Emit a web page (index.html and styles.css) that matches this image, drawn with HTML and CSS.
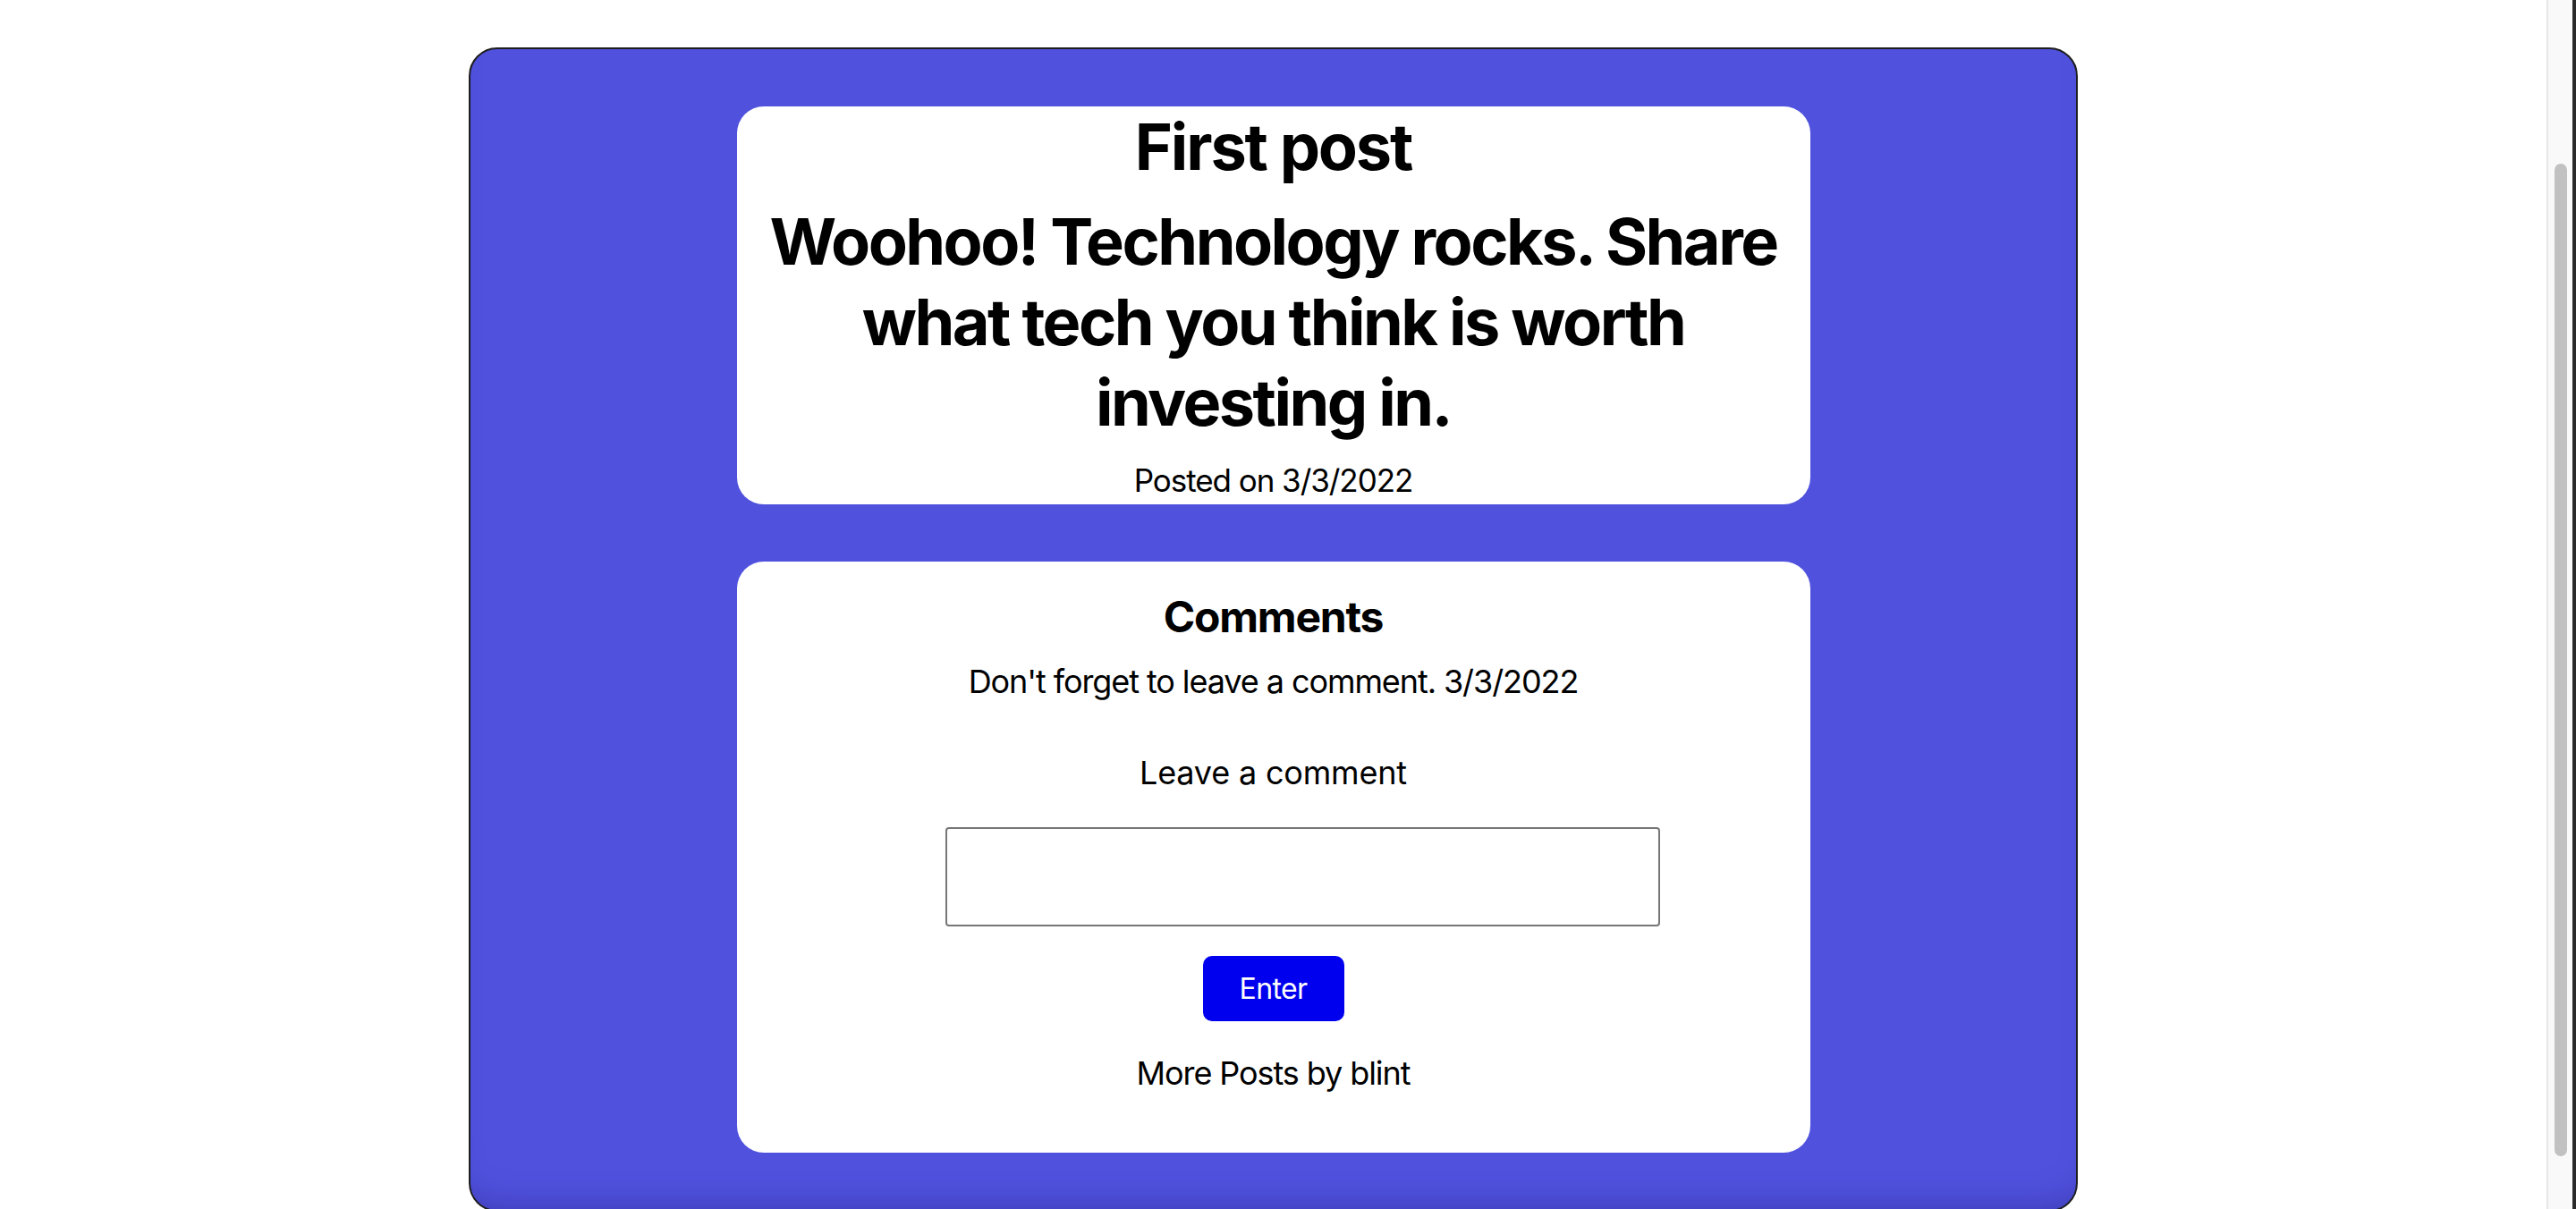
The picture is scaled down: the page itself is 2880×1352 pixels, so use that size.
FILE: index.html
```html
<!DOCTYPE html>
<html lang="en">
<head>
<meta charset="utf-8">
<title>First post</title>
<link rel="stylesheet" href="styles.css">
</head>
<body>
<div class="window">
  <main class="page">
    <section class="board">
      <article class="card post">
        <h1 class="post-title">First post</h1>
        <h2 class="post-body">Woohoo! Technology rocks. Share what tech you think is worth investing in.</h2>
        <p class="post-date">Posted on 3/3/2022</p>
      </article>
      <article class="card comments">
        <h3 class="comments-title">Comments</h3>
        <p class="comment">Don't forget to leave a comment. 3/3/2022</p>
        <label class="leave" for="c">Leave a comment</label>
        <textarea id="c" class="comment-input"></textarea>
        <button class="enter">Enter</button>
        <p class="more">More Posts by blint</p>
      </article>
    </section>
  </main>
  <div class="scrollbar"><div class="thumb"></div></div>
  <div class="edge"></div>
</div>
</body>
</html>
```
FILE: styles.css
```css
html, body {
  margin: 0;
  padding: 0;
  height: 1352px;
  overflow: hidden;
  background: #ffffff;
}
body {
  font-family: Inter, "Noto Sans", "Liberation Sans", sans-serif;
  color: #000;
}
.window {
  display: flex;
  height: 1352px;
}
.page {
  flex: 1;
  display: flex;
  justify-content: center;
  align-items: flex-start;
  padding-top: 53px;
  overflow: hidden;
}
.board {
  width: 1799px;
  box-sizing: border-box;
  border: 2px solid #1e1e1e;
  border-radius: 32px;
  background: #5052de;
  padding: 64px 0;
  display: flex;
  flex-direction: column;
  align-items: center;
  gap: 64px;
  box-shadow: inset 0 -30px 40px -30px rgba(20, 10, 90, 0.35);
  flex-shrink: 0;
}
.card {
  width: 1200px;
  box-sizing: border-box;
  background: #fff;
  border-radius: 30px;
  display: flex;
  flex-direction: column;
  align-items: center;
  text-align: center;
}
.post {
  padding: 0;
}
.post-title {
  margin: 0;
  font-size: 72px;
  line-height: 90px;
  font-weight: 700;
  letter-spacing: -0.03em;
}
.post-body {
  margin: 16px 0 0;
  font-size: 72px;
  line-height: 90px;
  font-weight: 700;
  letter-spacing: -0.035em;
}
.post-date {
  margin: 15px 0 0;
  font-size: 35px;
  line-height: 54px;
  letter-spacing: -0.03em;
}
.comments {
  padding: 32px 0 62px;
}
.comments-title {
  margin: 0;
  font-size: 48px;
  line-height: 60px;
  font-weight: 700;
  letter-spacing: -0.025em;
}
.comment {
  margin: 15px 0 0;
  font-size: 36px;
  line-height: 54px;
  letter-spacing: -0.03em;
}
.leave {
  margin-top: 48px;
  font-size: 36px;
  line-height: 54px;
  letter-spacing: -0.005em;
}
.comment-input {
  margin: 34px 0 0 66px;
  width: 799px;
  height: 111px;
  box-sizing: border-box;
  border: 2px solid #767676;
  border-radius: 4px;
  resize: none;
  font: inherit;
  background: #fff;
}
.enter {
  margin-top: 33px;
  width: 158px;
  height: 73px;
  border: none;
  border-radius: 10px;
  background: #0000ee;
  color: #fff;
  font-family: inherit;
  font-size: 32px;
  letter-spacing: -0.02em;
  padding: 0;
}
.more {
  margin: 31px 0 0;
  font-size: 36px;
  line-height: 54px;
  letter-spacing: -0.03em;
}
.scrollbar {
  width: 29px;
  box-sizing: border-box;
  background: #f9f9f9;
  border-left: 2px solid #e6e6e6;
  padding: 183px 6px 0 7px;
}
.thumb {
  height: 1110px;
  background: #c1c1c1;
  border-radius: 8px;
}
.edge {
  width: 4px;
  background: #2a2a2a;
}
```
